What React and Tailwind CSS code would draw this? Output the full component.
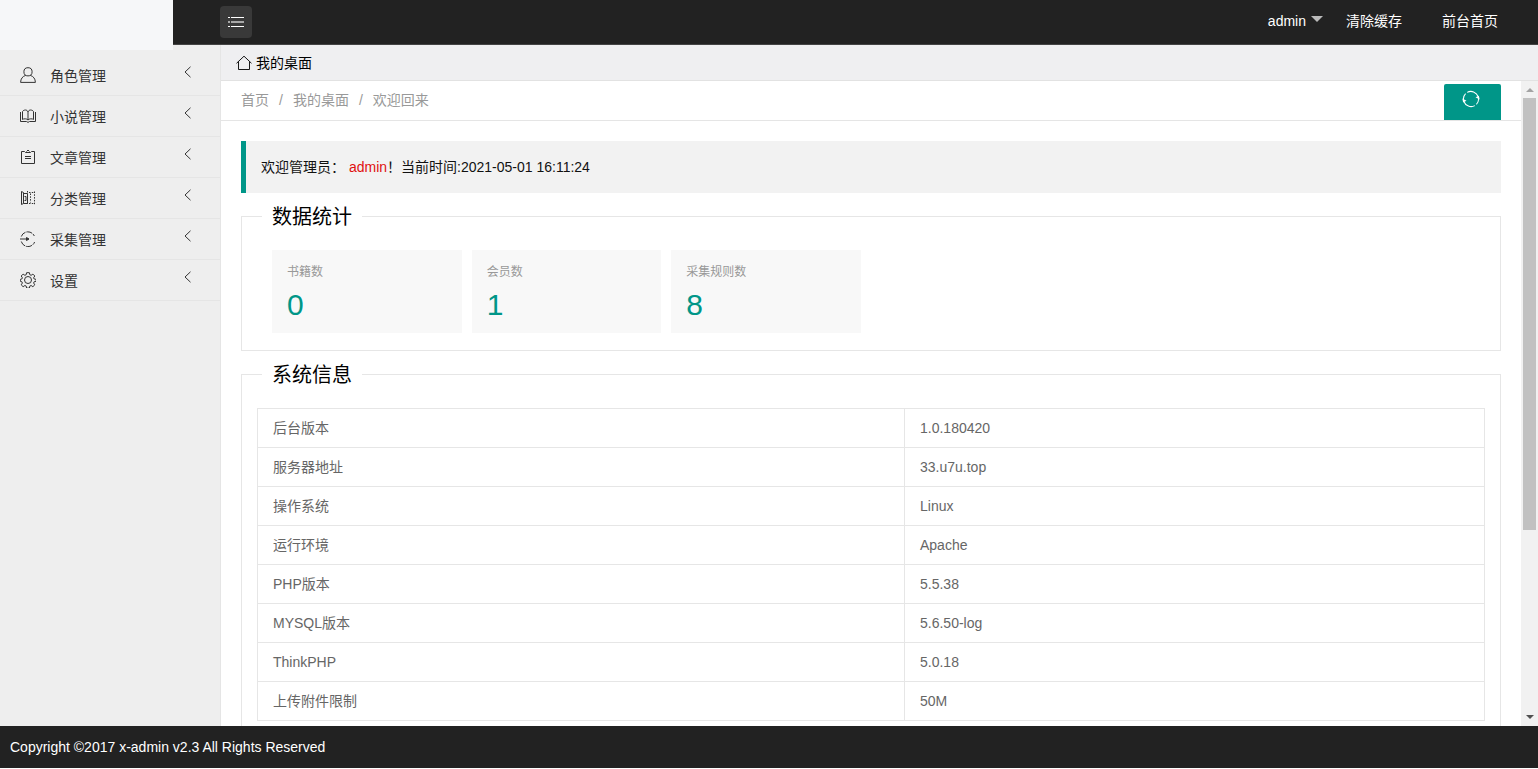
const menu = [
  { title: '角色管理', icon: UserIcon },
  { title: '小说管理', icon: BookIcon },
  { title: '文章管理', icon: ClipboardIcon },
  { title: '分类管理', icon: CategoryIcon },
  { title: '采集管理', icon: CollectIcon },
  { title: '设置', icon: GearIcon },
];

const stats = [
  { label: '书籍数', value: 0 },
  { label: '会员数', value: 1 },
  { label: '采集规则数', value: 8 },
];

const systemInfo = [
  ['后台版本', '1.0.180420'],
  ['服务器地址', '33.u7u.top'],
  ['操作系统', 'Linux'],
  ['运行环境', 'Apache'],
  ['PHP版本', '5.5.38'],
  ['MYSQL版本', '5.6.50-log'],
  ['ThinkPHP', '5.0.18'],
  ['上传附件限制', '50M'],
];

function Icon({ children, className = 'size-4' }) {
  return (
    <svg viewBox="0 0 16 16" className={className} fill="none" stroke="currentColor" strokeWidth="1" aria-hidden="true">
      {children}
    </svg>
  );
}

function UserIcon() {
  return (
    <Icon>
      <circle cx="8" cy="4.8" r="4.1" />
      <path d="M5.6 8.4C2.6 9.4.7 11.6.6 15.4h14.8c-.1-3.8-2-6-5-7" />
    </Icon>
  );
}

function BookIcon() {
  return (
    <Icon>
      <path d="M8 4C7.500 2.500 6.500 2 5.500 2S3.200 2.400 2.500 3.500v8c1-1 4.500-1 5.500.5 1-1.500 4.500-1.500 5.500-.5v-8C12.800 2.400 11.500 2 10.500 2S8.500 2.500 8 4zM8 4v8" />
      <path d="M.5 4v9.500h6l1.500.9 1.500-.9h6V4" />
    </Icon>
  );
}

function ClipboardIcon() {
  return (
    <Icon>
      <path d="M4.500 2.500h-3v12h13v-12h-3M4.500 2.500l1 1h5l1-1M6.500 2.500L8 1l1.500 1.500M5 7.500h6M5 9.500h6" />
    </Icon>
  );
}

function CategoryIcon() {
  return (
    <Icon>
      <path d="M1.500 1.500l2 1v11l-2 1zM3.500 3.500h4v10h-4M4.500 6.500h1.500v4H4.500" />
      <path d="M7.500 1v14M10.500 3.500v9M14.500 1.500v13M9 2.500h5M9 13.500h5" strokeDasharray="1.500 1.300" />
    </Icon>
  );
}

function CollectIcon() {
  return (
    <Icon>
      <path d="M1.300 5.500a7 7 0 0 1 13-.5M1.300 10.500a7 7 0 0 0 13.300.5" strokeDasharray="6 1" />
      <path d="M0 8h8.500" />
      <path d="M6.500 6.500L9 8 6.500 9.500z" fill="currentColor" />
    </Icon>
  );
}

function GearIcon() {
  return (
    <Icon>
      <circle cx="8" cy="8" r="3.500" />
      <path d="M6.600.7h2.800l.4 2 1.300.6 1.800-1.200 1.900 1.900-1.200 1.800.6 1.200 2 .4v1.900l-2 .4-.6 1.300 1.200 1.800-1.900 1.900-1.800-1.200-1.300.6-.4 2H6.600l-.4-2-1.300-.6-1.800 1.200-1.900-1.900 1.200-1.800-.6-1.300-1.500-.4V7.400l1.500-.4.6-1.200-1.200-1.800 1.900-1.900 1.800 1.200 1.300-.6z" />
    </Icon>
  );
}

function Header() {
  return (
    <header className="flex h-[45px] shrink-0 items-start border-b border-[#444] bg-[#222] text-white">
      <div className="z-10 h-[50px] w-[173px] shrink-0 bg-[#f6f7f9]" />
      <button aria-label="菜单" className="mt-1.5 ml-[47px] flex size-8 items-center justify-center rounded-sm bg-[#393939]">
        <Icon>
          <path d="M0 3.500h2M3 3.500h13M0 12.500h2M3 12.500h13" />
          <path d="M0 8h2M3 8h13" strokeWidth="1.500" opacity=".75" />
        </Icon>
      </button>
      <nav className="ml-auto flex h-[42px] items-center pr-10">
        <button className="flex items-center gap-[5px]">
          admin
          <span className="-mt-1 border-x-6 border-t-6 border-x-transparent border-t-[#bbb]" />
        </button>
        <a href="#clear" className="ml-[23px]">清除缓存</a>
        <a href="#home" className="ml-10">前台首页</a>
      </nav>
    </header>
  );
}

function Sidebar() {
  return (
    <aside className="w-[221px] shrink-0 border-r border-[#e5e5e5] bg-[#eee] pt-2.5">
      <ul>
        {menu.map(({ title, icon: MenuIcon }) => (
          <li key={title} className="border-b border-[#e5e5e5]">
            <a href="#menu" className="flex h-10 items-center pl-5 text-[#333]">
              <MenuIcon />
              <span className="ml-3.5 flex-1 pt-0.5">{title}</span>
              <svg viewBox="0 0 8 12" className="mr-7 mb-1.5 h-3 w-2" fill="none" stroke="currentColor" aria-hidden="true">
                <path d="M6.500.8L1 6l5.500 5.200" />
              </svg>
            </a>
          </li>
        ))}
      </ul>
    </aside>
  );
}

function Panel({ title, children }) {
  return (
    <fieldset className="mt-2.5 border border-[#e6e6e6]">
      <legend className="ml-5 px-2.5 pt-0.5 text-xl leading-6 text-black">{title}</legend>
      {children}
    </fieldset>
  );
}

function Scrollbar() {
  return (
    <div className="flex w-[17px] shrink-0 flex-col items-center bg-[#f1f1f1]" aria-hidden="true">
      <span className="mt-[7px] mb-1.5 border-x-4 border-b-4 border-x-transparent border-b-[#a3a3a3]" />
      <div className="h-[67%] w-[13px] bg-[#c1c1c1]" />
      <span className="mt-auto mb-[7px] border-x-4 border-t-4 border-x-transparent border-t-[#505050]" />
    </div>
  );
}

function Welcome() {
  return (
    <div className="min-w-0 flex-1 overflow-hidden bg-white">
      <div className="flex h-10 items-end justify-between border-b border-[#e5e5e5] px-5">
        <nav className="flex gap-2.5 self-center pb-0.5 text-[#999]">
          <a href="#home">首页</a>
          <span>/</span>
          <a href="#desktop">我的桌面</a>
          <span>/</span>
          <a href="#welcome">欢迎回来</a>
        </nav>
        <button aria-label="刷新" className="flex h-9 w-[57px] justify-center rounded-t-xs bg-[#009688] pt-1.5 pr-1 text-white">
          <Icon className="size-[18px]">
            <path d="M1.700 10.200A6.800 6.800 0 0 1 3.200 3.300M4.600 2.100A6.800 6.800 0 0 1 14.300 5.800M14.300 5.800A6.800 6.800 0 0 1 12.800 12.700M11.400 13.900A6.800 6.800 0 0 1 1.700 10.200" strokeWidth=".9" />
            <path d="M.3 7.500l.7 3.500 3-1.500zM15.700 8.500L15 5l-3 1.500z" fill="currentColor" stroke="none" />
          </Icon>
        </button>
      </div>
      <main className="p-5">
        <blockquote className="border-l-5 border-[#009688] bg-[#f2f2f2] p-[15px] leading-[22px] text-[#111]">
          欢迎管理员： <span className="text-[#e01010]">admin</span>！当前时间:2021-05-01 16:11:24
        </blockquote>
        <Panel title="数据统计">
          <ul className="grid grid-cols-6 gap-2.5 pt-[21px] pr-10 pb-[17px] pl-[30px]">
            {stats.map((s) => (
              <li key={s.label} className="bg-[#f8f8f8] px-[15px] py-3 text-[#999]">
                <h3 className="text-xs leading-5">{s.label}</h3>
                <p className="mt-1.5 text-3xl leading-[33px] text-[#009688]">{s.value}</p>
              </li>
            ))}
          </ul>
        </Panel>
        <Panel title="系统信息">
          <div className="p-[15px] pt-[21px]">
            <table className="w-full border-collapse text-[#666]">
              <tbody>
                {systemInfo.map(([name, value]) => (
                  <tr key={name}>
                    <th scope="row" className="h-[39px] border border-[#e6e6e6] px-[15px] text-left font-normal">{name}</th>
                    <td className="w-[580px] border border-[#e6e6e6] px-[15px]">{value}</td>
                  </tr>
                ))}
              </tbody>
            </table>
          </div>
        </Panel>
      </main>
    </div>
  );
}

export default function App() {
  return (
    <div className="flex h-screen flex-col overflow-hidden bg-white font-['Liberation_Sans','Noto_Sans_CJK_SC',sans-serif] text-sm">
      <Header />
      <div className="flex min-h-0 flex-1">
        <Sidebar />
        <div className="flex min-w-0 flex-1 flex-col">
          <div className="flex h-9 shrink-0 items-center border-b border-[#e2e2e2] bg-[#efeff1] pl-[15px] text-black">
            <Icon>
              <path d="M.5 8.300L8 1.200l7.500 7.100M2.500 6.700v7.800h11V6.700" strokeWidth=".9" />
            </Icon>
            <span className="ml-1">我的桌面</span>
          </div>
          <div className="flex min-h-0 flex-1">
            <Welcome />
            <Scrollbar />
          </div>
        </div>
      </div>
      <footer className="mb-px flex h-[42px] shrink-0 items-center bg-[#222] px-2.5 text-white">
        Copyright ©2017 x-admin v2.3 All Rights Reserved
      </footer>
    </div>
  );
}
